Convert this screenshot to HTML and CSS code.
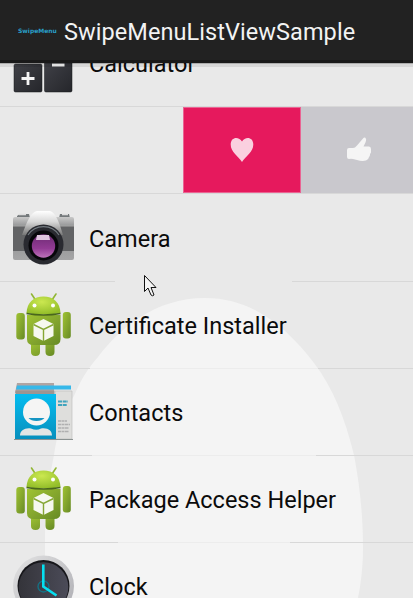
FILE: index.html
```html
<!DOCTYPE html>
<html lang="en">
<head>
<meta charset="utf-8">
<title>SwipeMenuListViewSample</title>
<link rel="stylesheet" href="styles.css">
</head>
<body>
<svg class="defs" width="0" height="0" aria-hidden="true">
  <defs>
    <linearGradient id="green" x2="1" y2="1"><stop stop-color="#9fc332"/><stop offset=".55" stop-color="#82a42d"/><stop offset="1" stop-color="#668a24"/></linearGradient>
    <radialGradient id="head" cx=".45" cy=".3" r=".7"><stop stop-color="#cbe850"/><stop offset="1" stop-color="#92bd29"/></radialGradient>
    <linearGradient id="blue" x2="0" y2="1"><stop stop-color="#05bdf0"/><stop offset="1" stop-color="#078fbd"/></linearGradient>
    <linearGradient id="metal" x2="0" y2="1"><stop stop-color="#c9c9c9"/><stop offset=".25" stop-color="#8b8c8d"/><stop offset="1" stop-color="#a5a5a6"/></linearGradient>
    <linearGradient id="hump" x2="0" y2="1"><stop stop-color="#fff"/><stop offset=".45" stop-color="#d8d8d8"/><stop offset="1" stop-color="#777"/></linearGradient>
    <linearGradient id="lens" x2="0" y2="1"><stop stop-color="#6d2b73"/><stop offset=".6" stop-color="#923b94"/><stop offset="1" stop-color="#bd72b9"/></linearGradient>
    <linearGradient id="rim" x2="1" y2="1"><stop stop-color="#e4e4e4"/><stop offset="1" stop-color="#aaaab0"/></linearGradient>
    <linearGradient id="face" x2="1"><stop stop-color="#34343a"/><stop offset="1" stop-color="#4b4b58"/></linearGradient>
    <linearGradient id="key" x2="1" y2="1"><stop stop-color="#404147"/><stop offset="1" stop-color="#25262b"/></linearGradient>
    <symbol id="android" viewBox="0 0 60 68">
      <path d="M17.500 3l4 6M42 3l-4 6" stroke="#91b635" stroke-width="1.600" stroke-linecap="round"/>
      <path d="M17 51h9v10q0 4-4.500 4T17 61zM31.500 51h9v10q0 4-4.500 4t-4.500-4z" fill="url(#green)"/>
      <rect x="2.300" y="22" width="8.500" height="26.500" rx="3" fill="url(#green)"/>
      <rect x="48.800" y="21" width="8" height="26.500" rx="3" fill="url(#green)"/>
      <path d="M13 24h33.500v24q0 6-6.500 6H19.500q-6.500 0-6.500-6z" fill="url(#green)"/>
      <path d="M12.500 22C13 11 20 5.500 29.500 5.500S46 11 46.500 22q-17 3-34 0z" fill="url(#head)"/>
      <path d="M12.500 22.500q17 3 34 0" fill="none" stroke="#49671c" stroke-width="1.500"/>
      <circle cx="20.500" cy="14.500" r="2" fill="#fff"/><circle cx="39" cy="14.500" r="2" fill="#fff"/>
      <path d="M29.500 28L39.500 33v12l-10 5-10-5V33z" fill="#f6f8f0"/>
      <path d="M19.500 33.500l10 5 10-5M29.500 38.500V50" fill="none" stroke="#86a735" stroke-width="1.400"/>
    </symbol>
  </defs>
</svg>
<div class="screen">
  <header class="bar">
    <span class="logo">SwipeMenu</span>
    <h1 class="title">SwipeMenuListViewSample</h1>
  </header>
  <main class="content">
    <svg class="glow" viewBox="0 0 413 535" aria-hidden="true"><path d="M45 535V472C45 446 48 422 54 392C57 372 62 350 74 333C80 318 88 305 98 294C120 265 155 235 205 235C254 235 288 266 314 300C333 325 345 355 354 392C360 424 363 453 363 485C363 503 361 520 358 535z"/></svg>
    <ul class="list">
      <li class="row">
        <svg class="icon" viewBox="0 0 60 68" aria-hidden="true">
          <rect x="0" y="5" width="28" height="28" fill="url(#key)"/><rect x="30" y="5" width="28" height="28" fill="url(#key)"/>
          <rect x="0" y="35" width="28" height="28" rx="1.500" fill="url(#key)" stroke="#17181b" stroke-width=".5"/>
          <rect x="30.500" y="33" width="27.500" height="30" rx="1.500" fill="url(#key)" stroke="#17181b" stroke-width=".5"/>
          <path d="M7.500 49.500h13M14 43v13M38 36h12.500" stroke="#f4f4f4" stroke-width="2.800"/>
        </svg>
        <span class="name">Calculator</span>
      </li>
      <li class="row swiped">
        <div class="action like">
          <svg width="24" height="26" viewBox="0 0 24 26" aria-hidden="true"><path d="M12 25C8 19 .7 15 .7 7.500C.7-.5 9-.8 12 4.500C15-.8 23.300-.5 23.300 7.500C23.300 15 16 19 12 25z" fill="#fad0df"/></svg>
        </div>
        <div class="action good">
          <svg width="26" height="26" viewBox="0 0 26 26" aria-hidden="true"><path d="M1 13q0-2 2-2h4q2 0 4-2.500l6-7Q19-.5 20 2q.6 2-2.500 7.500h5.500q2 .2 2 2.500v3q.2 1-1 2 .2 2-1 3-.5 3-3 3.500-4 1-9-.5L7 22q-2-.7-4 0-2 0-2-2z" fill="#f5f5f5"/></svg>
        </div>
      </li>
      <li class="row gap-camera">
        <svg class="icon" viewBox="0 0 60 68" aria-hidden="true">
          <path d="M3 12l3-2h9l1 4H3zM46 10h9l1 4H45z" fill="#74797b"/>
          <path d="M5 10.500h7M48 10.500h6" stroke="#ddd" stroke-width="1.300"/>
          <rect x="-1" y="13" width="61" height="43" rx="2" fill="url(#metal)"/>
          <path d="M-1 22h61v25H-1z" fill="#626365"/><path d="M-1 22h61" stroke="#a5a5a5"/>
          <path d="M8 31C13 17 17 8 23 7h13C42 9 45 18 49 31z" fill="url(#hump)"/>
          <circle cx="29.500" cy="40.500" r="20" fill="#292a30"/>
          <path d="M14 31a18.500 18.500 0 0 1 31 0" stroke="#737a80" stroke-width="1.200" fill="none"/>
          <circle cx="29.500" cy="41.500" r="15" fill="#07070a"/><circle cx="29.500" cy="42" r="11.700" fill="url(#lens)"/>
          <path d="M23 31h12l1 5H22z" fill="#dfc5df"/>
        </svg>
        <span class="name">Camera</span>
      </li>
      <li class="row gap-installer"><svg class="icon" aria-hidden="true"><use href="#android"/></svg><span class="name">Certificate Installer</span></li>
      <li class="row gap-contacts">
        <svg class="icon" viewBox="0 0 60 68" aria-hidden="true">
          <path d="M3 5h37v10H1z" fill="#b1a4a2"/><path d="M40 5h16l2 9H40z" fill="#e8e8e8"/>
          <path d="M3 7.500h54v4H2z" fill="#36b8e9"/><path d="M1.500 12.500h39v4h-39z" fill="#9d9591"/>
          <path d="M41 13h17v48H41z" fill="#dededc" stroke="#bbb" stroke-width=".6"/>
          <rect x="1" y="16" width="41" height="45" fill="url(#blue)"/>
          <circle cx="22.500" cy="34" r="13.500" fill="#f5f5f4"/><path d="M14.500 40h16c-3 4-13 4-16 0z" fill="#1695c2"/>
          <path d="M6 57.500c0-5 5-8 11-7q5.500 2.500 10 0c7-1 11 2 11 7z" fill="#e3e5e4"/>
          <path d="M44 23.500h10M44 27h9" stroke="#3fa3bd" stroke-width="2" stroke-dasharray="4 .7"/>
          <path d="M44 43h9M44 46.500h12M44 50h11M44 53.500h11" stroke="#b0b0b0" stroke-width="1.600" stroke-dasharray="3 .5"/>
          <path d="M0 61.500h59" stroke="#8b9291"/>
        </svg>
        <span class="name">Contacts</span>
      </li>
      <li class="row gap-helper"><svg class="icon" aria-hidden="true"><use href="#android"/></svg><span class="name">Package Access Helper</span></li>
      <li class="row last">
        <svg class="icon" viewBox="0 0 60 68" aria-hidden="true">
          <circle cx="29.500" cy="34" r="30.500" fill="url(#rim)"/><circle cx="29.500" cy="34" r="26" fill="#17171b"/><circle cx="29.500" cy="35" r="24.800" fill="url(#face)"/>
          <circle cx="29.500" cy="34.500" r="5.500" fill="none" stroke="#147487" stroke-width="1.300"/>
          <path d="M29.300 12.500v22L42.500 43.500" fill="none" stroke="#05dff0" stroke-width="2.600"/>
        </svg>
        <span class="name">Clock</span>
      </li>
    </ul>
  </main>
  <svg class="cursor" width="13" height="22" viewBox="0 0 13 22" aria-hidden="true"><path d="M.5.500v16l3.500-3.500 3 7q1.500 1.500 3 0l-3-7.500h5z" fill="#f5f5f5" stroke="#111"/></svg>
</div>
</body>
</html>
```
FILE: styles.css
```css
* { box-sizing: border-box; }
body { margin: 0; font-family: Roboto, "Liberation Sans", sans-serif; }
.defs { position: absolute; }
.screen { position: relative; width: 413px; height: 598px; overflow: hidden; background: #e9e9e9; display: flex; flex-direction: column; }
.bar { flex: none; height: 63px; display: flex; align-items: center; padding-left: 18px; background: #222; border-bottom: 3px solid #191919; z-index: 1; box-shadow: 0 1px 0 rgba(0, 0, 0, .2), 0 4px 0 rgba(0, 0, 0, .08); }
.logo { width: 46px; color: #299fc8; font: bold 6px "DejaVu Sans", sans-serif; }
.title { margin: 4px 0 0; font-size: 23.5px; font-weight: 400; line-height: 30px; letter-spacing: .07px; color: #f3f3f3; white-space: nowrap; }
.content { position: relative; flex: 1; min-height: 0; overflow: hidden; }
.glow { position: absolute; top: 0; left: 0; width: 413px; height: 535px; fill: #f4f4f4; }
.list { position: relative; list-style: none; margin: -43px 0 0; padding: 0; display: grid; grid-template-rows: 87px 87px 88px 87px 87px 87px 87px; }
.row {
  --from: 0px; --to: 0px; --line: #d8d8d8; --mid: #ececec;
  display: flex; align-items: center; padding: 0 0 1px 14px;
  background: linear-gradient(90deg, var(--line) var(--from), var(--mid) var(--from) var(--to), var(--line) var(--to)) bottom / 100% 1px no-repeat;
}
.gap-camera { --from: 115px; --to: 292px; --mid: #e9e9e9; }
.gap-installer { --from: 90px; --to: 318px; }
.gap-contacts { --from: 92px; --to: 316px; }
.gap-helper { --from: 118px; --to: 290px; }
.icon { flex: none; width: 60px; height: 68px; overflow: visible; }
.name { margin: 2px 0 0 15px; font-size: 23.5px; line-height: 30px; color: #0b0b0b; white-space: nowrap; }
.swiped { padding-left: 183px; align-items: stretch; }
.action { display: flex; align-items: center; justify-content: center; }
.like { width: 118px; background: #e6195d; border: 1px solid #ea6493; }
.good { flex: 1; background: #c9c8cd; padding-left: 4px; }
.cursor { position: absolute; left: 144px; top: 275px; }
```
